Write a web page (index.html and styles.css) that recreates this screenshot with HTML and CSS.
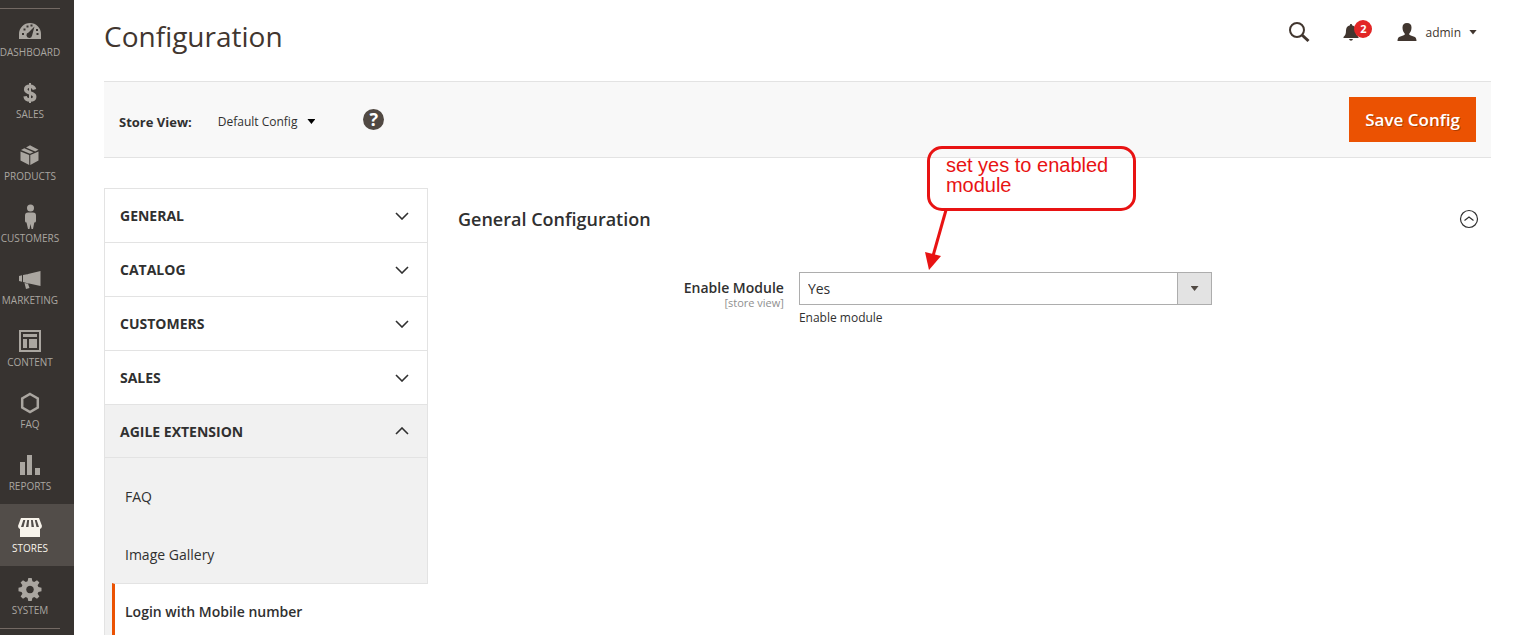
FILE: index.html
```
<!DOCTYPE html>
<html lang="en">

<head>
    <meta charset="UTF-8">
    <meta name="viewport" content="width=device-width, initial-scale=1.0">
    <title>Configuration / Stores</title>
    <link rel="stylesheet" href="styles.css">
</head>

<body>
    <div class="page">
        <!-- Main menu -->
        <nav class="menu" aria-label="Main menu">
            <ul class="menu-list">
                <li><a class="menu-item" href="#">
                    <svg class="menu-icon" viewBox="0 0 24 24">
                        <path fill-rule="evenodd" d="M1 20V15a11 11 0 0 1 22 0v5zM16.500 7.500L10.500 13.500a2.800 2.800 0 1 0 3.500 3.200zM4 14h2v2H4zM5.500 9.500h2v2h-2zM8.500 6.500h2v2h-2zM12.500 5.500h2v2h-2zM18 10h2v2h-2zM18.500 14h2v2h-2z" />
                    </svg>
                    <span>Dashboard</span>
                </a></li>
                <li><a class="menu-item" href="#">
                    <svg class="menu-icon" viewBox="0 0 24 24">
                        <g fill="none" stroke="currentColor" stroke-width="3.500">
                            <path d="M16.500 8.500C16 6.300 14.500 5.300 12 5.300c-2.600 0-4.300 1.200-4.300 3.200 0 4.600 9 2.500 9 7.200 0 2-1.800 3.300-4.600 3.300-2.900 0-4.700-1.300-5-3.800" />
                            <path stroke-width="2" d="M12 2v20" />
                        </g>
                    </svg>
                    <span>Sales</span>
                </a></li>
                <li><a class="menu-item" href="#">
                    <svg class="menu-icon" viewBox="0 0 24 24">
                        <path d="M2.500 8.500l8.700 3.600V22l-8.700-4.500zM20.500 8.500l-8.200 3.600V22l8.200-4.500zM3 7l3.300-1.700 9.200 4L12 10.800zM8 4.400L12 2.300l8.500 4.500-3.300 1.600z" />
                    </svg>
                    <span>Products</span>
                </a></li>
                <li><a class="menu-item" href="#">
                    <svg class="menu-icon" viewBox="0 0 24 24">
                        <circle cx="12.500" cy="3" r="3.500" />
                        <path d="M10 7.500h5q3 0 3 3V16q0 1.500-1.700 1.500L15 24h-1.500l-1-5-1 5H10l-1.500-6.500Q7 17.500 7 16v-5.500q0-3 3-3z" />
                    </svg>
                    <span>Customers</span>
                </a></li>
                <li><a class="menu-item" href="#">
                    <svg class="menu-icon" viewBox="0 0 24 24">
                        <path d="M22.500 4v15L10 16.200V7zM5 8l5.500-1v9.500L5 15zM1 9l3-.8v6.600L1 14zM6.500 16l3.500.7 1.500 4.300-3.500 1z" />
                    </svg>
                    <span>Marketing</span>
                </a></li>
                <li><a class="menu-item" href="#">
                    <svg class="menu-icon" viewBox="0 0 24 24">
                        <path fill-rule="evenodd" d="M1 1h22v22H1zM3 3v18h18V3zM5 5h14v3H5zM5 10h4v9H5zM11 10h8v9h-8z" />
                    </svg>
                    <span>Content</span>
                </a></li>
                <li><a class="menu-item" href="#">
                    <svg class="menu-icon" viewBox="0 0 24 24">
                        <path fill="none" stroke="currentColor" stroke-width="2.500" d="M12 3l7.800 4.500v9L12 21l-7.800-4.500v-9z" />
                    </svg>
                    <span>FAQ</span>
                </a></li>
                <li><a class="menu-item" href="#">
                    <svg class="menu-icon" viewBox="0 0 24 24">
                        <path d="M2 9h5v13H2zM9 2h5v20H9zM17 15h5v7h-5z" />
                    </svg>
                    <span>Reports</span>
                </a></li>
                <li><a class="menu-item active" href="#" aria-current="page">
                    <svg class="menu-icon" viewBox="0 0 24 24">
                        <path fill-rule="evenodd" d="M3 3h18l3 8q-.3 3-2 3v8H2v-8q-1.700 0-2-3zM5.300 5L3 12h2.500L7.300 5zM9.200 5L8 12h2.500l.6-7zM13 5l.5 7H16l-1.200-7zM16.800 5l1.700 7H21l-2.300-7z" />
                    </svg>
                    <span>Stores</span>
                </a></li>
                <li><a class="menu-item" href="#">
                    <svg class="menu-icon" viewBox="0 0 24 24">
                        <path fill-rule="evenodd" d="M10.300 1h3.400l.7 3.200 1.800.8L19 3.200 21.400 5.500l-1.800 2.800.8 1.800 3.100.7v3.400l-3.100.7-.8 1.800 1.800 2.800-2.400 2.300-2.800-1.700-1.800.8-.7 3.100h-3.400l-.7-3.100-1.800-.8L5 21.800l-2.400-2.300 1.800-2.800-.8-1.800-3.100-.7v-3.400l3.100-.7.8-1.800-1.800-2.800L5 3.200 7.800 5l1.800-.8zM12 8.700a3.800 3.800 0 1 0 .01 0z" />
                    </svg>
                    <span>System</span>
                </a></li>
            </ul>
        </nav>

        <div class="main">
            <header class="page-header">
                <h1 class="page-title">Configuration</h1>
                <div class="header-actions">
                    <button class="icon-button" type="button" aria-label="Search">
                        <svg viewBox="0 0 22 22" width="22" height="22">
                            <circle cx="9" cy="9" r="7" fill="none" stroke="currentColor" stroke-width="2" />
                            <path d="M14 14l6.500 6" stroke="currentColor" stroke-width="3" />
                        </svg>
                    </button>
                    <button class="icon-button notifications" type="button" aria-label="Notifications">
                        <svg viewBox="0 0 16 18" width="16" height="18">
                            <path d="M8 1c.9 0 1 .6 1 1.200 2.600.6 4 2.600 4 5.300 0 3.500.7 5 2.500 6.500v1H.5v-1C2.300 12.500 3 11 3 7.500c0-2.700 1.400-4.700 4-5.300C7 1.600 7.100 1 8 1zM6 16h4q-.5 1.700-2 1.700T6 16z" />
                        </svg>
                        <span class="badge">2</span>
                    </button>
                    <button class="account" type="button">
                        <svg viewBox="0 0 20 18" width="20" height="18">
                            <path d="M10 0c3 0 4.500 1.600 4.500 4.500 0 2.500-.8 4.700-2.200 6v1.200c1 .9 3.200 1.200 5 2 1.500.7 2.200 1.800 2.200 4.300H.5c0-2.500.7-3.600 2.200-4.300 1.800-.8 4-1.100 5-2v-1.200c-1.400-1.300-2.200-3.500-2.200-6C5.500 1.600 7 0 10 0z" />
                        </svg>
                        <span>admin</span>
                        <span class="caret"></span>
                    </button>
                </div>
            </header>

            <div class="toolbar">
                <span class="store-label" id="store-label">Store View:</span>
                <button class="store-switcher" type="button" aria-describedby="store-label">
                    <span>Default Config</span>
                    <span class="caret"></span>
                </button>
                <a class="help" href="#" aria-label="What is this?">?</a>
                <button class="save" type="button">Save Config</button>
            </div>

            <div class="columns">
                <!-- Config sections -->
                <nav class="config-nav" aria-label="Configuration sections">
                    <button class="section" type="button">General
                        <svg class="outline" viewBox="0 0 14 8" width="14" height="8"><path d="M1 1l6 6 6-6" /></svg>
                    </button>
                    <button class="section" type="button">Catalog
                        <svg class="outline" viewBox="0 0 14 8" width="14" height="8"><path d="M1 1l6 6 6-6" /></svg>
                    </button>
                    <button class="section" type="button">Customers
                        <svg class="outline" viewBox="0 0 14 8" width="14" height="8"><path d="M1 1l6 6 6-6" /></svg>
                    </button>
                    <button class="section" type="button">Sales
                        <svg class="outline" viewBox="0 0 14 8" width="14" height="8"><path d="M1 1l6 6 6-6" /></svg>
                    </button>
                    <button class="section open" type="button" aria-expanded="true">Agile Extension
                        <svg class="outline" viewBox="0 0 14 8" width="14" height="8"><path d="M1 7l6-6 6 6" /></svg>
                    </button>
                    <ul class="sub-list">
                        <li><a class="sub-item" href="#">FAQ</a></li>
                        <li><a class="sub-item" href="#">Image Gallery</a></li>
                        <li><a class="sub-item current" href="#" aria-current="page">Login with Mobile number</a></li>
                    </ul>
                </nav>

                <section class="config">
                    <div class="config-head">
                        <h2 class="config-title">General Configuration</h2>
                        <button class="icon-button" type="button" aria-label="Collapse">
                            <svg class="outline" viewBox="0 0 20 20" width="20" height="20">
                                <circle cx="10" cy="10" r="8.500" />
                                <path d="M5.500 11.500L10 8l4.500 3.500" />
                            </svg>
                        </button>
                    </div>
                    <div class="field">
                        <div class="field-label">
                            <label for="enable-module">Enable Module</label>
                            <span class="scope">[store view]</span>
                        </div>
                        <div class="field-value">
                            <div class="select-wrap">
                                <select id="enable-module">
                                    <option selected>Yes</option>
                                    <option>No</option>
                                </select>
                                <span class="select-arrow"><span class="caret"></span></span>
                            </div>
                            <p class="note">Enable module</p>
                            <div class="callout">
                                <p class="callout-text">set yes to enabled module</p>
                                <svg class="callout-arrow" viewBox="0 0 24 62" width="24" height="62">
                                    <path d="M19 0L6 46" stroke="currentColor" stroke-width="3" />
                                    <path d="M-2 42l16 4-12 14z" fill="currentColor" />
                                </svg>
                            </div>
                        </div>
                    </div>
                </section>
            </div>
        </div>
    </div>
</body>

</html>
```
FILE: styles.css
```
:root {
    --menu-bg: #373330;
    --menu-active: #524d49;
    --menu-text: #aaa6a0;
    --text: #303030;
    --brown: #41362f;
    --border: #e3e3e3;
    --orange: #eb5202;
    --note-red: #e81313;
}

* {
    margin: 0;
    padding: 0;
    box-sizing: border-box;
}

body {
    font-family: "Open Sans", "Noto Sans", sans-serif;
    font-size: 14px;
    color: var(--text);
    background-color: #fff;
}

button {
    font: inherit;
    color: inherit;
    background: none;
    border: none;
    cursor: pointer;
}

a {
    color: inherit;
    text-decoration: none;
}

ul {
    list-style: none;
}

svg {
    fill: currentColor;
}

.outline {
    fill: none;
    stroke: currentColor;
    stroke-width: 1.2;
}

.page {
    display: flex;
    height: 100vh;
    overflow: hidden;
}

/* Main menu */
.menu {
    flex: 0 0 74px;
    padding-top: 8px;
    background-color: var(--menu-bg);
    overflow: hidden;
}

.menu::after {
    content: "";
    display: block;
    width: 60px;
    border-top: 1px solid #736963;
}

.menu-list {
    background: linear-gradient(#736963, #736963) 0 0 / 60px 1px no-repeat;
}

.menu-item {
    display: flex;
    flex-direction: column;
    align-items: center;
    gap: 2px;
    height: 62px;
    padding: 11px 14px 0 0;
    color: var(--menu-text);
    font-size: 10px;
    line-height: 14px;
    text-transform: uppercase;
}

.menu-icon {
    flex: none;
    width: 24px;
    height: 24px;
    overflow: visible;
}

.menu-item.active {
    color: #f7f3eb;
    background-color: var(--menu-active);
}

/* Header */
.main {
    flex: 1;
    min-width: 0;
    padding: 0 30px;
}

.page-header {
    display: flex;
    justify-content: space-between;
    height: 81px;
    padding: 16px 14px 0 0;
    color: var(--brown);
}

.page-title {
    font-size: 28px;
    font-weight: 400;
    line-height: 40px;
}

.header-actions {
    display: flex;
    align-items: center;
    height: 32px;
}

.icon-button {
    display: flex;
    align-items: center;
}

.notifications {
    position: relative;
    margin: 0 38px 0 33px;
}

.badge {
    position: absolute;
    top: -3px;
    left: 11px;
    width: 18px;
    height: 18px;
    border-radius: 50%;
    background-color: #e22626;
    color: #fff;
    font-size: 11px;
    font-weight: 700;
    line-height: 18px;
    text-align: center;
}

.account {
    display: flex;
    align-items: center;
    gap: 8px;
    font-size: 12px;
}

.caret {
    width: 8px;
    height: 5px;
    background-color: currentColor;
    clip-path: polygon(0 0, 100% 0, 50% 100%);
}

/* Toolbar */
.toolbar {
    display: flex;
    align-items: center;
    height: 77px;
    padding: 0 15px;
    border: solid var(--border);
    border-width: 1px 0;
    background-color: #f8f8f8;
}

.store-label {
    margin: 4px 26px 0 0;
    font-size: 13px;
    font-weight: 700;
}

.store-switcher {
    display: flex;
    align-items: center;
    gap: 10px;
    margin: 4px 48px 0 0;
    font-size: 12px;
}

.store-switcher .caret {
    color: #000;
}

.help {
    width: 21px;
    height: 21px;
    border-radius: 50%;
    background-color: #514943;
    color: #fff;
    font-size: 18px;
    font-weight: 700;
    line-height: 21px;
    text-align: center;
}

.save {
    height: 45px;
    margin-left: auto;
    padding: 0 16px;
    background-color: var(--orange);
    color: #fff;
    font-size: 17px;
    font-weight: 600;
    text-shadow: 1px 1px 0 rgba(0, 0, 0, 0.25);
}

.columns {
    display: grid;
    grid-template-columns: 324px 1fr;
    gap: 30px;
    padding-top: 30px;
}

/* Config sections */
.config-nav {
    border-top: 1px solid var(--border);
    border-left: 1px solid var(--border);
}

.section {
    display: flex;
    align-items: center;
    justify-content: space-between;
    width: 100%;
    height: 54px;
    padding: 0 18px 0 15px;
    border: solid var(--border);
    border-width: 0 1px 1px 0;
    font-weight: 700;
    text-transform: uppercase;
}

.section .outline {
    stroke-width: 1.6;
}

.section.open {
    height: 53px;
}

.section.open,
.sub-list {
    background-color: #f1f1f1;
}

.sub-list {
    padding-left: 7px;
}

.sub-list::before {
    content: "";
    display: block;
    height: 9px;
    border-right: 1px solid var(--border);
}

.sub-item {
    display: block;
    height: 58px;
    padding-left: 13px;
    border-right: 1px solid var(--border);
    line-height: 60px;
}

.sub-item.current {
    padding-left: 10px;
    border: solid var(--border);
    border-width: 1px 0;
    border-left: 3px solid var(--orange);
    background-color: #fff;
    font-weight: 600;
    line-height: 56px;
}

/* Config form */
.config-head {
    display: flex;
    align-items: center;
    justify-content: space-between;
    height: 62px;
    padding-right: 12px;
}

.config-title {
    font-size: 18px;
    font-weight: 600;
}

.field {
    display: grid;
    grid-template-columns: 33% 40%;
    padding-top: 22px;
}

.field-label {
    padding: 7px 15px 0 0;
    text-align: right;
    font-weight: 600;
    line-height: 18px;
}

.scope {
    display: block;
    color: #8f8f8f;
    font-size: 11px;
    font-weight: 400;
    line-height: 12px;
}

.field-value,
.select-wrap {
    position: relative;
}

select {
    display: block;
    width: 100%;
    height: 33px;
    padding: 0 40px 1px 8px;
    border: 1px solid #adadad;
    border-radius: 0;
    background-color: #fff;
    color: inherit;
    font: inherit;
    appearance: none;
}

.select-arrow {
    position: absolute;
    top: 0;
    right: 0;
    bottom: 0;
    display: flex;
    align-items: center;
    justify-content: center;
    width: 35px;
    border: 1px solid #adadad;
    background-color: #e3e3e3;
    color: #514943;
    pointer-events: none;
}

.note {
    padding-top: 4px;
    font-size: 12px;
    line-height: 17px;
}

/* Callout over the form, pointing at the select */
.callout {
    position: absolute;
    top: -126px;
    left: 128px;
    width: 209px;
    color: var(--note-red);
}

.callout-text {
    height: 65px;
    padding: 6px 12px 0 16px;
    border: 3px solid var(--note-red);
    border-radius: 15px;
    font-family: "Liberation Sans", Arial, sans-serif;
    font-size: 20px;
    line-height: 20px;
}

.callout-arrow {
    display: block;
    margin-top: -1px;
    overflow: visible;
}
```
